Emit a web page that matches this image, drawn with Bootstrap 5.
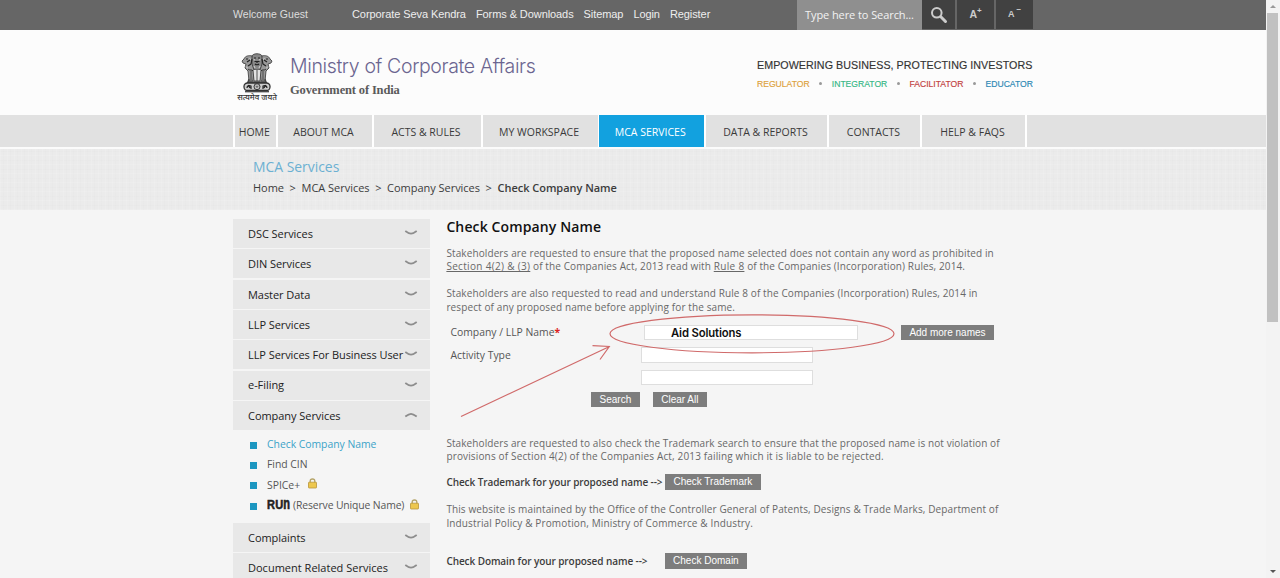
<!DOCTYPE html>
<html lang="en">
<head>
<meta charset="utf-8">
<meta name="viewport" content="width=device-width, initial-scale=1">
<title>Ministry of Corporate Affairs - Check Company Name</title>
<link rel="stylesheet" href="https://cdn.jsdelivr.net/npm/bootstrap@5.3.0/dist/css/bootstrap.min.css">
<style>
html,body{height:100%;overflow:hidden}
body{font-family:"Open Sans","Noto Sans",sans-serif;font-size:11px;color:#3c3c3c;background:#f5f5f5;line-height:1.2}
.arial{font-family:"Liberation Sans",Arial,sans-serif}
.page{height:578px;overflow:hidden}
.wrap{width:800px;margin:0 auto}
.topbar{height:30px;background:#666;color:#eee;font-size:11px;letter-spacing:-.08px}
.topbar .welcome{width:119px;font-size:10.5px;letter-spacing:.04px;color:#ddd;margin-top:-1px}
.topbar .links{gap:10px}
.searchbox{width:125px;height:30px;background:#8f8f8f;padding-left:8px;letter-spacing:-.08px;color:#f2f2f2}
.tool{height:29px;background:#414141;color:#ccc;font-size:9.5px;font-weight:700}
.tool sup{font-size:8px;top:-5px;line-height:0}
.brand{height:85px;background:#fcfcfc}
.emblem{width:48px;margin-left:2px;padding-top:23px}
.motto-hi{font-family:"Noto Sans Devanagari","Noto Sans",sans-serif;font-size:8px;font-weight:500;line-height:9px;color:#333;width:44px;text-align:center;margin-top:-1px}
.ministry{font-family:Inter,sans-serif;font-weight:300;font-size:19.5px;letter-spacing:-.36px;color:#6b6590;line-height:24px;margin-top:24px}
.goi{font-family:"Liberation Serif",serif;font-weight:700;font-size:12.5px;letter-spacing:-.15px;line-height:16px;margin-top:4px;color:#5a5a5a}
.tagline{font-size:10.7px;letter-spacing:.06px;color:#333;line-height:14px;margin-top:27.5px;-webkit-text-stroke:.15px #333}
.values{font-size:8.6px;letter-spacing:0;line-height:12px;margin-top:6px;width:276px;-webkit-text-stroke:.15px}
.dot{width:3.5px;height:3.5px;border-radius:50%;background:#999}
.mainnav{height:32px;background:#e1e1e1}
.mainnav a{border-left:2px solid #fff;color:#3a3a3a;font-size:10.5px;text-decoration:none;padding:2px 2px 0 0}
.mainnav a.on{background:#12a1df;color:#fff;border-left-width:1px}
.mainnav .last{border-left:2px solid #fff}
.banner{height:63px;border-top:2px solid #fbfbfb;background-color:#ebebeb;
 background-image:repeating-linear-gradient(90deg,rgba(255,255,255,.12) 0 1px,transparent 1px 3px,rgba(0,0,0,.008) 3px 4px,transparent 4px 7px),repeating-linear-gradient(0deg,rgba(255,255,255,.12) 0 1px,transparent 1px 4px,rgba(0,0,0,.008) 4px 5px,transparent 5px 9px)}
.banner h2{font-size:13.9px;font-weight:400;color:#6bb0d2;line-height:18px;margin:9px 0 0 20px}
.crumbs{margin:4px 0 0 20px;line-height:16px;font-size:11px;letter-spacing:-.03px;white-space:pre}
.side{width:197px;padding-top:9px}
.side-item{height:29px;margin-bottom:1.32px;background:#e8e8e8;padding:0 12px 0 15px;color:#222;letter-spacing:-.05px;white-space:nowrap}
.side-item svg{flex:none;margin-top:-1px}
.side-item:nth-child(5){letter-spacing:-.07px}
.sub{height:91.7px;padding:3px 0 0 17px;font-size:10.4px}
.sub li{height:20.3px;display:flex;align-items:center;letter-spacing:-.02px;white-space:nowrap;color:#555}
.sub li::before{content:"";width:7px;height:7px;background:#1c96c0;margin:2px 10px 0 0;flex:none}
.sub li.cur{color:#3ba3c8}
.sub svg{margin-top:-2px}
.runmark{font-family:"Liberation Sans",sans-serif;font-weight:700;font-size:12px;line-height:12px;color:#222;letter-spacing:.2px;-webkit-text-stroke:.5px #222;margin-right:0;display:inline-flex;align-items:baseline;width:26px;flex:none;transform:scaleX(.92);transform-origin:0 50%}
.runmark i{font-style:normal;display:inline-block;transform:scaleY(1.33);transform-origin:50% 82%}
.reserve{letter-spacing:-.13px}
.main{margin-left:16.5px;width:587px}
.main h1{font-size:14px;font-weight:600;letter-spacing:.12px;line-height:34px;margin:0 0 2.95px;color:#111}
.main p{font-size:10px;letter-spacing:.11px;line-height:13.5px;margin:0 0 13.5px;color:#686868;white-space:nowrap}
.main u{letter-spacing:.32px}
.frm{padding-left:4px;font-size:10.4px;color:#555}
.r1{margin-top:-4.5px;height:18px}
.box{background:#fff;border:1px solid #dedede;height:15.5px;flex:none}
.lbl{width:190.6px}
.typed{font-family:Inter,sans-serif;font-weight:600;font-size:11.3px;letter-spacing:-.14px;color:#111;line-height:14px;padding-left:26px}
.gbtn{font-family:"Liberation Sans",Arial,sans-serif;font-size:10px;line-height:15.5px;height:15.5px;padding:0;border:0;border-radius:0;background:#7d7d7d;color:#fff;text-align:center;flex:none}
.strongline{font-size:10px;font-weight:600;color:#3c3c3c;white-space:nowrap;height:16px;letter-spacing:-.08px}
.strongline .gbtn{letter-spacing:0}
.overlay{left:450px;top:305px;pointer-events:none}
.scroller{width:14px;height:578px;background:#f3f3f3}
.thumb{width:11px;height:309px;background:#c1c1c1;margin:13px auto 0 1.3px}
</style>
</head>
<body>
<div class="d-flex page">
<div class="flex-grow-1 position-relative">

<header>
<div class="topbar">
 <div class="wrap d-flex align-items-center arial">
  <span class="welcome">Welcome Guest</span>
  <nav class="links d-flex"><span>Corporate Seva Kendra</span><span>Forms &amp; Downloads</span><span>Sitemap</span><span>Login</span><span>Register</span></nav>
  <div class="d-flex ms-auto align-items-start">
   <div class="searchbox d-flex align-items-center" style="font-family:'Open Sans',sans-serif">Type here to Search...</div>
   <div class="tool d-flex align-items-center justify-content-center" style="width:33px"><svg width="18" height="18" viewBox="0 0 18 18" fill="none" stroke="#ccc"><circle cx="6.800" cy="6.800" r="4.800" stroke-width="2"/><path d="M10.800 10.800 15.500 15.500" stroke-width="3" stroke-linecap="round"/></svg></div>
   <div class="tool d-flex align-items-center justify-content-center" style="width:37px;margin-left:2px"><span style="font-size:10.500px">A<sup>+</sup></span></div>
   <div class="tool d-flex align-items-center justify-content-center" style="width:37px;margin-left:2px"><span style="font-size:9px">A<sup> &minus;</sup></span></div>
  </div>
 </div>
</div>

<div class="brand">
 <div class="wrap d-flex">
  <div class="emblem">
   <svg class="d-block" width="44" height="42" viewBox="0 0 44 42" fill="none" stroke="#444" stroke-width=".9">
    <path d="M17 3c1-3 9-3 10 0l1 4-1 6-2 4h-6l-2-4-1-6z" fill="#888"/>
    <path d="M17 3c-3-1-7 0-8 3l-2 2 1 2 3 1-1 4 3 3 1 10h4l1-11-2-6zM27 3c3-1 7 0 8 3l2 2-1 2-3 1 1 4-3 3-1 10h-4l-1-11 2-6z" fill="#999"/>
    <path d="M19 5h2M23 5h2M19.500 8.500h5M20 11c1 1 3 1 4 0M11 6h2M31 6h2M12 9l3-2M32 9l-3-2M13 13l3-2M31 13l-3-2M22 8v2M17 6l-1 5M27 6l1 5" stroke="#222" stroke-width="1.200"/>
    <path d="M14.500 5.500l1.500 1M29.500 5.500l-1.500 1M18.500 6.800h1.500M24 6.800h1.500M11 13.500l2 2M33 13.500l-2 2M19 13l1 2M25 13l-1 2" stroke="#ddd" stroke-width=".9"/>
    <path d="M18 17l1 11h6l1-11M22 17v11M16 18v9M28 18v9" stroke="#444" fill="#e4e4e4"/>
    <path d="M13 16c2 2 4 0 5 2M31 16c-2 2-4 0-5 2" stroke="#222"/>
    <path d="M14 26l-1 3h18l-1-3M12 29.500h20" stroke-width="1.300"/>
    <rect x="9" y="30" width="26" height="7.500" rx="3.500" fill="#ccc" stroke="#333" stroke-width="1.300"/>
    <circle cx="22" cy="33.700" r="3" fill="#eee" stroke="#222"/><path d="M22 31v5.500M19 33.700h6M20 31.700l4 4M24 31.700l-4 4" stroke-width=".5"/>
    <path d="M12 35c0-2 2-3 4-2v3M32 35c0-2-2-3-4-2v3M13 32l2 3M31 32l-2 3" stroke="#222" stroke-width="1.200"/>
    <path d="M10 38.700h24" stroke-width="1.300"/>
   </svg>
   <div class="motto-hi">सत्यमेव जयते</div>
  </div>
  <div style="margin-left:7px">
   <div class="ministry">Ministry of Corporate Affairs</div>
   <div class="goi">Government of India</div>
  </div>
  <div class="ms-auto arial">
   <div class="tagline">EMPOWERING BUSINESS, PROTECTING INVESTORS</div>
   <div class="values d-flex justify-content-between align-items-center"><span style="color:#dca13a">REGULATOR</span><i class="dot"></i><span style="color:#35b785">INTEGRATOR</span><i class="dot"></i><span style="color:#c2403c">FACILITATOR</span><i class="dot"></i><span style="color:#2b87b4">EDUCATOR</span></div>
  </div>
 </div>
</div>

<div class="mainnav">
 <nav class="wrap d-flex h-100 text-center">
  <a class="d-flex align-items-center justify-content-center" style="width:42.500px">HOME</a>
  <a class="d-flex align-items-center justify-content-center" style="width:96px">ABOUT MCA</a>
  <a class="d-flex align-items-center justify-content-center" style="width:109px">ACTS &amp; RULES</a>
  <a class="d-flex align-items-center justify-content-center" style="width:117px">MY WORKSPACE</a>
  <a class="d-flex align-items-center justify-content-center on" style="width:106.500px">MCA SERVICES</a>
  <a class="d-flex align-items-center justify-content-center" style="width:123px">DATA &amp; REPORTS</a>
  <a class="d-flex align-items-center justify-content-center" style="width:93px">CONTACTS</a>
  <a class="d-flex align-items-center justify-content-center" style="width:105px">HELP &amp; FAQS</a>
  <span class="last"></span>
 </nav>
</div>

<div class="banner"><div class="wrap overflow-hidden">
 <h2>MCA Services</h2>
 <div class="crumbs"><span>Home</span>  &gt;  <span>MCA Services</span>  &gt;  <span>Company Services</span>  &gt;  <span class="fw-semibold">Check Company Name</span></div>
</div></div>
</header>

<div class="wrap d-flex">
 <aside class="side">
  <div class="side-item d-flex align-items-center justify-content-between">DSC Services<svg width="14" height="8" viewBox="0 0 14 8"><path d="M1.300 2Q5 4.700 7 4.700T12.700 2" fill="none" stroke="#8c8c8c" stroke-width="1.800"/></svg></div>
  <div class="side-item d-flex align-items-center justify-content-between">DIN Services<svg width="14" height="8" viewBox="0 0 14 8"><path d="M1.300 2Q5 4.700 7 4.700T12.700 2" fill="none" stroke="#8c8c8c" stroke-width="1.800"/></svg></div>
  <div class="side-item d-flex align-items-center justify-content-between">Master Data<svg width="14" height="8" viewBox="0 0 14 8"><path d="M1.300 2Q5 4.700 7 4.700T12.700 2" fill="none" stroke="#8c8c8c" stroke-width="1.800"/></svg></div>
  <div class="side-item d-flex align-items-center justify-content-between">LLP Services<svg width="14" height="8" viewBox="0 0 14 8"><path d="M1.300 2Q5 4.700 7 4.700T12.700 2" fill="none" stroke="#8c8c8c" stroke-width="1.800"/></svg></div>
  <div class="side-item d-flex align-items-center justify-content-between">LLP Services For Business User<svg width="14" height="8" viewBox="0 0 14 8"><path d="M1.300 2Q5 4.700 7 4.700T12.700 2" fill="none" stroke="#8c8c8c" stroke-width="1.800"/></svg></div>
  <div class="side-item d-flex align-items-center justify-content-between">e-Filing<svg width="14" height="8" viewBox="0 0 14 8"><path d="M1.300 2Q5 4.700 7 4.700T12.700 2" fill="none" stroke="#8c8c8c" stroke-width="1.800"/></svg></div>
  <div class="side-item d-flex align-items-center justify-content-between">Company Services<svg width="14" height="8" viewBox="0 0 14 8"><path d="M1.300 5.500Q5 2.800 7 2.800T12.700 5.500" fill="none" stroke="#8c8c8c" stroke-width="1.800"/></svg></div>
  <ul class="sub list-unstyled mb-0">
   <li class="cur">Check Company Name</li>
   <li>Find CIN</li>
   <li>SPICe+<svg class="ms-2" width="9" height="11" viewBox="0 0 9 11"><path d="M2.200 5V3a2.300 2 0 0 1 4.600 0v2" fill="none" stroke="#b5a468" stroke-width="1.300"/><rect x=".5" y="4.200" width="8" height="5.800" rx=".6" fill="#edc74e" stroke="#b9963a" stroke-width=".8"/></svg></li>
   <li><span class="runmark">RU<i>n</i></span><span class="reserve">(Reserve Unique Name)</span><svg style="margin-left:6px" width="9" height="11" viewBox="0 0 9 11"><path d="M2.200 5V3a2.300 2 0 0 1 4.600 0v2" fill="none" stroke="#b5a468" stroke-width="1.300"/><rect x=".5" y="4.200" width="8" height="5.800" rx=".6" fill="#edc74e" stroke="#b9963a" stroke-width=".8"/></svg></li>
  </ul>
  <div class="side-item d-flex align-items-center justify-content-between">Complaints<svg width="14" height="8" viewBox="0 0 14 8"><path d="M1.300 2Q5 4.700 7 4.700T12.700 2" fill="none" stroke="#8c8c8c" stroke-width="1.800"/></svg></div>
  <div class="side-item d-flex align-items-center justify-content-between" style="letter-spacing:.01px">Document Related Services<svg width="14" height="8" viewBox="0 0 14 8"><path d="M1.300 2Q5 4.700 7 4.700T12.700 2" fill="none" stroke="#8c8c8c" stroke-width="1.800"/></svg></div>
 </aside>

 <main class="main">
  <h1>Check Company Name</h1>
  <p>Stakeholders are requested to ensure that the proposed name selected does not contain any word as prohibited in<br><u>Section 4(2) &amp; (3)</u> of the Companies Act, 2013 read with <u>Rule 8</u> of the Companies (Incorporation) Rules, 2014.</p>
  <p>Stakeholders are also requested to read and understand Rule 8 of the Companies (Incorporation) Rules, 2014 in<br>respect of any proposed name before applying for the same.</p>
  <form class="frm">
   <div class="d-flex align-items-center r1"><span class="lbl" style="width:193.600px">Company / LLP Name<b style="color:#d22">*</b></span><div class="box typed" style="width:214px">Aid Solutions</div><button type="button" class="gbtn" style="width:93px;margin-left:43px">Add more names</button></div>
   <div class="d-flex align-items-center" style="height:27px"><span class="lbl">Activity Type</span><div class="box" style="width:172px"></div></div>
   <div class="d-flex align-items-center" style="height:18px"><span class="lbl"></span><div class="box" style="width:172px"></div></div>
   <div class="d-flex" style="padding:5.300px 0 0 140.500px;height:50.300px"><button type="button" class="gbtn" style="width:49px">Search</button><button type="button" class="gbtn" style="width:54px;margin-left:13px">Clear All</button></div>
  </form>
  <p style="margin-bottom:10.500px;letter-spacing:.095px">Stakeholders are requested to also check the Trademark search to ensure that the proposed name is not violation of<br><span style="letter-spacing:.15px">provisions of Section 4(2) of the Companies Act, 2013 failing which it is liable to be rejected.</span></p>
  <div class="strongline d-flex align-items-center" style="margin-bottom:13px"><span style="width:218.500px">Check Trademark for your proposed name --&gt;</span><button type="button" class="gbtn" style="width:96px">Check Trademark</button></div>
  <p style="margin-bottom:23px">This website is maintained by the Office of the Controller General of Patents, Designs &amp; Trade Marks, Department of<br><span style="letter-spacing:.14px">Industrial Policy &amp; Promotion, Ministry of Commerce &amp; Industry.</span></p>
  <div class="strongline d-flex align-items-center"><span style="width:218.500px">Check Domain for your proposed name --&gt;</span><button type="button" class="gbtn" style="width:82px">Check Domain</button></div>
 </main>
</div>

<!-- hand-drawn callout over the form -->
<svg class="overlay position-absolute" width="460" height="120" viewBox="450 305 460 120" fill="none" stroke="#d06a6a" stroke-width="1.200"><ellipse cx="752" cy="333.800" rx="142" ry="19"/><path d="M461 416.500 609 346.800M592.500 345.700 609.300 346.500 600 359.500"/></svg>
</div>

<div class="scroller flex-shrink-0 d-flex flex-column position-relative">
 <svg class="position-absolute" style="left:3px;top:4px" width="8" height="5"><path d="M1 4 4 1 7 4z" fill="#999"/></svg>
 <div class="thumb"></div>
 <svg class="position-absolute" style="left:3px;bottom:4px" width="8" height="5"><path d="M1 1 4 4 7 1z" fill="#555"/></svg>
</div>
</div>
<script src="https://cdn.jsdelivr.net/npm/bootstrap@5.3.0/dist/js/bootstrap.bundle.min.js"></script>
</body>
</html>
